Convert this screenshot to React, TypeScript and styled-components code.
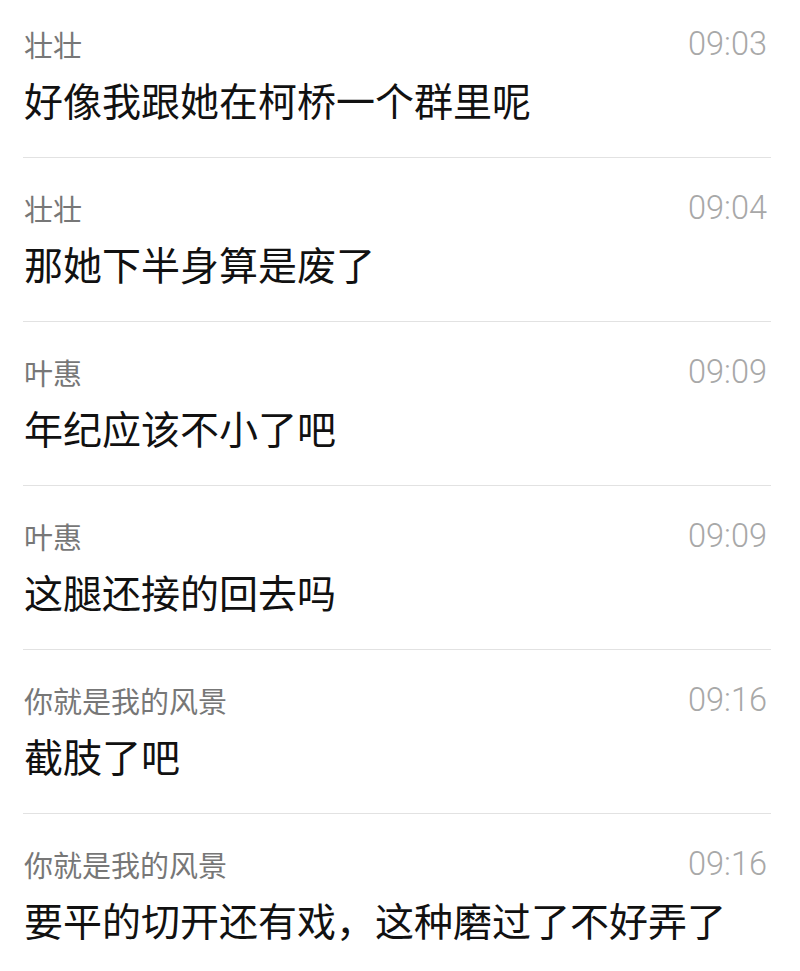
import React from "react";
import styled, { createGlobalStyle } from "styled-components";

const messages = [
  { name: "壮壮", time: "09:03", text: "好像我跟她在柯桥一个群里呢" },
  { name: "壮壮", time: "09:04", text: "那她下半身算是废了" },
  { name: "叶惠", time: "09:09", text: "年纪应该不小了吧" },
  { name: "叶惠", time: "09:09", text: "这腿还接的回去吗" },
  { name: "你就是我的风景", time: "09:16", text: "截肢了吧" },
  { name: "你就是我的风景", time: "09:16", text: "要平的切开还有戏，这种磨过了不好弄了" },
];

const GlobalStyle = createGlobalStyle`
  html, body {
    margin: 0;
    padding: 0;
    background: #ffffff;
  }
  body {
    font-family: "Noto Sans CJK SC", "Noto Sans", sans-serif;
    overflow: hidden;
  }
`;

const App = () => (
  <>
    <GlobalStyle />
    <List>
      {messages.map((m, i) => (
        <Row key={i}>
          <Header>
            <Name>{m.name}</Name>
            <Time>{m.time}</Time>
          </Header>
          <Text>{m.text}</Text>
        </Row>
      ))}
    </List>
  </>
);

export default App;

const List = styled.div`
  display: flex;
  flex-direction: column;
  height: 971px;
  overflow: hidden;
  padding: 0 29px 0 23px;
`;

const Row = styled.div`
  display: flex;
  flex-direction: column;
  padding: 30px 4px 33px 1px;
  border-bottom: 1px solid #e2e2e2;
  flex-shrink: 0;

  &:first-child {
    padding-top: 24px;
  }
`;

const Header = styled.div`
  display: flex;
  align-items: center;
  justify-content: space-between;
  height: 40px;
`;

const Name = styled.span`
  font-size: 29px;
  color: #777777;
  line-height: 40px;
`;

const Time = styled.span`
  font-family: "Roboto", "Liberation Sans", sans-serif;
  font-weight: 300;
  font-size: 32.5px;
  color: #a8a8a8;
  line-height: 40px;
`;

const Text = styled.div`
  margin-top: 10px;
  font-size: 39px;
  line-height: 50px;
  color: #111111;
  white-space: nowrap;
`;
